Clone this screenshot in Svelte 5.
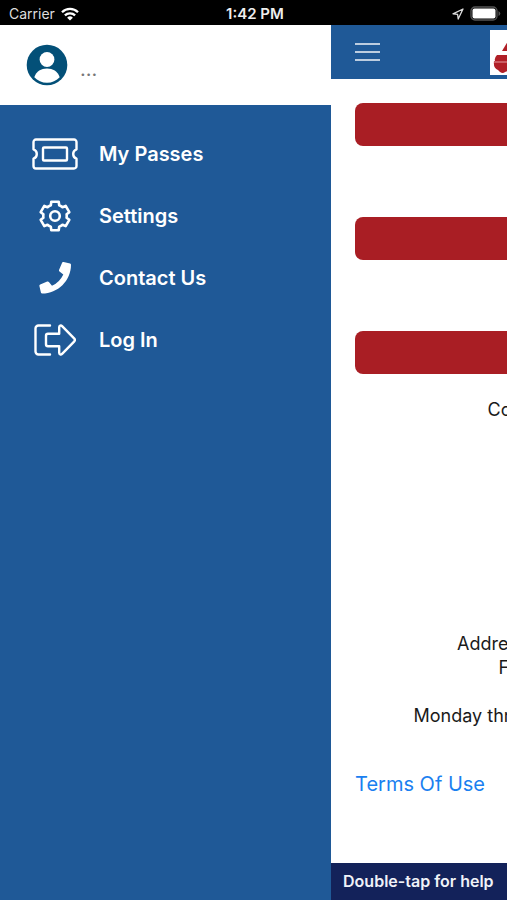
<script>
  const menu = [
    { id: 'passes', label: 'My Passes' },
    { id: 'settings', label: 'Settings' },
    { id: 'contact', label: 'Contact Us' },
    { id: 'login', label: 'Log In' },
  ]

  const actions = ['Buy passes', 'View passes', 'Find parking']

  // width is the measure of each centred line on the page
  const contact = [
    { text: 'Co', width: 194 },
  ]
  const office = [
    { text: 'Addre', width: 255 },
    { text: 'F', width: 172 },
    { text: '', width: 0 },
    { text: 'Monday thr', width: 342 },
  ]
</script>

<div class="app">
  <header class="status">
    <div class="carrier">
      <span>Carrier</span>
      <svg width="18" height="14" viewBox="0 0 18 14" aria-hidden="true">
        <g fill="none" stroke="#fff" stroke-width="2.3">
          <path d="M1 5.2a11.4 11.4 0 0 1 16 0" />
          <path d="M3.9 8.4a7.2 7.2 0 0 1 10.2 0" />
        </g>
        <path d="M9 13.6 6.1 10.7a4.1 4.1 0 0 1 5.8 0z" fill="#fff" />
      </svg>
    </div>
    <span class="time">1:42 PM</span>
    <div class="power">
      <svg width="12" height="12" viewBox="0 0 12 12" aria-hidden="true">
        <path d="M11 1 1 5.8l4.6.5.6 4.7z" fill="none" stroke="#ddd" stroke-width="1.3" stroke-linejoin="round" />
      </svg>
      <svg width="31" height="15" viewBox="0 0 31 15" aria-hidden="true">
        <rect x="1" y="1" width="26" height="13" rx="4" fill="none" stroke="#555" stroke-width="1.3" />
        <rect x="2.500" y="2.500" width="23" height="10" rx="2" fill="#fff" />
        <path d="M28.5 5v5q1.8-1 1.8-2.5T28.5 5z" fill="#555" />
      </svg>
    </div>
  </header>

  <div class="body">
    <aside class="drawer">
      <div class="profile">
        <svg width="42" height="42" viewBox="0 0 42 42" aria-hidden="true">
          <circle cx="21" cy="21" r="20.3" fill="#035078" />
          <circle cx="21" cy="15.5" r="7.4" fill="#fff" />
          <path d="M8.3 33.2C10.5 27.3 15 24.6 21 24.6s10.5 2.7 12.7 8.6C30.5 36.7 26 38.7 21 38.7s-9.5-2-12.7-5.5z" fill="#fff" />
        </svg>
        <span class="name">...</span>
      </div>

      <nav>
        {#each menu as item}
          <a class="item" href="#{item.id}">
            <span class="icon">
              {#if item.id === 'passes'}
                <svg width="46" height="32" viewBox="0 0 46 32" aria-hidden="true">
                  <g fill="none" stroke="#fff" stroke-width="2.4" stroke-linejoin="round">
                    <path d="M4 1.5h38a2.5 2.5 0 0 1 2.5 2.5v7.3a5 5 0 0 0 0 9.4V28a2.5 2.5 0 0 1-2.5 2.5H4A2.5 2.5 0 0 1 1.5 28v-7.300a5 5 0 0 0 0-9.400V4A2.500 2.500 0 0 1 4 1.500z" />
                    <rect x="11" y="9.500" width="24" height="13" rx="1" />
                  </g>
                </svg>
              {:else if item.id === 'settings'}
                <svg width="32" height="32" viewBox="0 0 32 32" aria-hidden="true">
                  <g fill="none" stroke="#fff" stroke-width="2.6" stroke-linejoin="round">
                    <path d="M12.300 1.800h7.400l.5 3.500q1.800.6 3.300 2l3.200-1.400 3.600 6.300-2.700 2.100q.3 1.700 0 3.400l2.700 2.100-3.600 6.300-3.200-1.400q-1.500 1.400-3.300 2l-.5 3.500h-7.400l-.5-3.500q-1.800-.6-3.300-2l-3.200 1.400-3.600-6.300 2.700-2.100q-.3-1.700 0-3.400l-2.700-2.100 3.600-6.300 3.200 1.400q1.500-1.400 3.300-2z" />
                    <circle cx="16" cy="16" r="4.800" />
                  </g>
                </svg>
              {:else if item.id === 'contact'}
                <svg width="32" height="32" viewBox="0 0 32 32" aria-hidden="true">
                  <path d="M31.100 1.500 24.600 0q-1.100-.2-1.500.8l-3 7q-.4 1 .4 1.600l3.800 3.100a23 23 0 0 1-11.300 11.300l-3.100-3.800q-.7-.8-1.700-.4l-7 3q-1 .5-.8 1.500l1.500 6.500q.3 1 1.300 1C18.800 31.600 32 18.800 32 2.800q0-1-.9-1.300z" fill="#fff" />
                </svg>
              {:else}
                <svg width="42" height="32" viewBox="0 0 42 32" aria-hidden="true">
                  <g fill="none" stroke="#fff" stroke-width="2.4" stroke-linejoin="round" stroke-linecap="round">
                    <path d="M16 1.500H4.500a3 3 0 0 0-3 3v23a3 3 0 0 0 3 3H16" />
                    <path d="M14 9.800h11.200V3.300c0-1.800 1.700-2.400 2.900-1.200l12 12.200q1.500 1.700 0 3.400l-12 12.200c-1.200 1.200-2.900.6-2.900-1.200v-6.500H14a2 2 0 0 1-2-2v-8.400a2 2 0 0 1 2-2z" />
                  </g>
                </svg>
              {/if}
            </span>
            {item.label}
          </a>
        {/each}
      </nav>
    </aside>

    <div class="viewport">
      <div class="page">
        <div class="topbar">
          <button class="burger" aria-label="Menu">
            <span></span>
            <span></span>
            <span></span>
          </button>
          <div class="logo">
            <svg width="190" height="45" viewBox="0 0 190 45" aria-hidden="true">
              <path d="M18 11v10h-6z" fill="#b01f27" />
              <path d="M7 25h11v6H5q-1-3 2-6z" fill="#b01f27" />
              <path d="M4 31h14v10l-3 1q-2 2-5 0l-2-2q-5-2-4-9z" fill="#b01f27" />
              <path d="M4 32h14" stroke="#e59ca0" />
            </svg>
          </div>
        </div>

        <main>
          <div class="actions">
            {#each actions as action}
              <button class="action" aria-label={action}></button>
            {/each}
          </div>

          <div class="lines contact">
            {#each contact as line}
              <p style:width="{line.width}px">{line.text}</p>
            {/each}
          </div>

          <div class="lines office">
            {#each office as line}
              <p style:width="{line.width}px">{line.text}</p>
            {/each}
          </div>

          <a class="terms" href="#terms">Terms Of Use</a>
        </main>

        <footer>Double-tap for help</footer>
      </div>
    </div>
  </div>
</div>

<style>
  :global(body) {
    background: #fff;
    font-family: Inter, Roboto, sans-serif;
  }

  .app {
    display: flex;
    flex-direction: column;
    min-height: 100vh;
  }

  /* ── Status bar ── */
  .status {
    display: grid;
    grid-template-columns: 1fr auto 1fr;
    align-items: center;
    height: 25px;
    padding: 2px 6px 0 9px;
    box-sizing: border-box;
    background: #000;
    color: #ddd;
    font-size: 14px;
  }

  .carrier,
  .power {
    display: flex;
    align-items: center;
    gap: 6px;
  }

  .power {
    justify-content: flex-end;
  }

  .time {
    color: #eee;
    font-size: 15px;
    font-weight: 600;
  }

  .body {
    display: flex;
    flex: 1;
  }

  /* ── Drawer ── */
  .drawer {
    flex: 0 0 65.3%;
    background: #1f5997;
  }

  .profile {
    display: flex;
    align-items: center;
    gap: 12px;
    height: 80px;
    padding-left: 26px;
    background: #fff;
  }

  .name {
    padding-top: 8px;
    color: #777;
    font-size: 20px;
  }

  nav {
    padding-top: 18px;
  }

  .item {
    display: flex;
    align-items: center;
    gap: 20px;
    height: 62px;
    padding-left: 32px;
    color: #fff;
    font-size: 20px;
    font-weight: 600;
    text-decoration: none;
  }

  .icon {
    display: flex;
    justify-content: center;
    width: 46px;
    margin-right: 1px;
  }

  /* ── Page, pushed aside by the drawer ── */
  .viewport {
    display: flex;
    flex: 1;
    min-width: 0;
    overflow: hidden;
  }

  .page {
    display: flex;
    flex: 0 0 100vw;
    flex-direction: column;
  }

  .topbar {
    display: grid;
    grid-template-columns: 1fr auto 1fr;
    align-items: center;
    height: 54px;
    padding: 0 24px;
    box-sizing: border-box;
    background: #1f5997;
  }

  .burger {
    display: flex;
    flex-direction: column;
    gap: 6px;
    width: 25px;
    padding: 0;
    border: none;
    background: none;
    cursor: pointer;
  }

  .burger span {
    height: 2px;
    background: #bccde0;
  }

  .logo {
    display: flex;
    background: #fff;
  }

  main {
    flex: 1;
    padding: 24px;
  }

  .actions {
    display: flex;
    flex-direction: column;
    gap: 71px;
  }

  .action {
    height: 43px;
    border: none;
    border-radius: 8px;
    background: #a91e24;
    cursor: pointer;
  }

  .lines p {
    height: 24px;
    margin: 0 auto;
    color: #1a1a1a;
    font-size: 18px;
    line-height: 24px;
    white-space: nowrap;
  }

  .contact {
    margin-top: 24px;
  }

  .office {
    margin-top: 210px;
  }

  .terms {
    display: inline-block;
    margin-top: 44px;
    color: #1a80f0;
    font-size: 20px;
    line-height: 24px;
    text-decoration: none;
  }

  footer {
    height: 37px;
    padding-left: 12px;
    background: #13225a;
    color: #f0f2f8;
    font-size: 16px;
    font-weight: 600;
    line-height: 37px;
  }
</style>
